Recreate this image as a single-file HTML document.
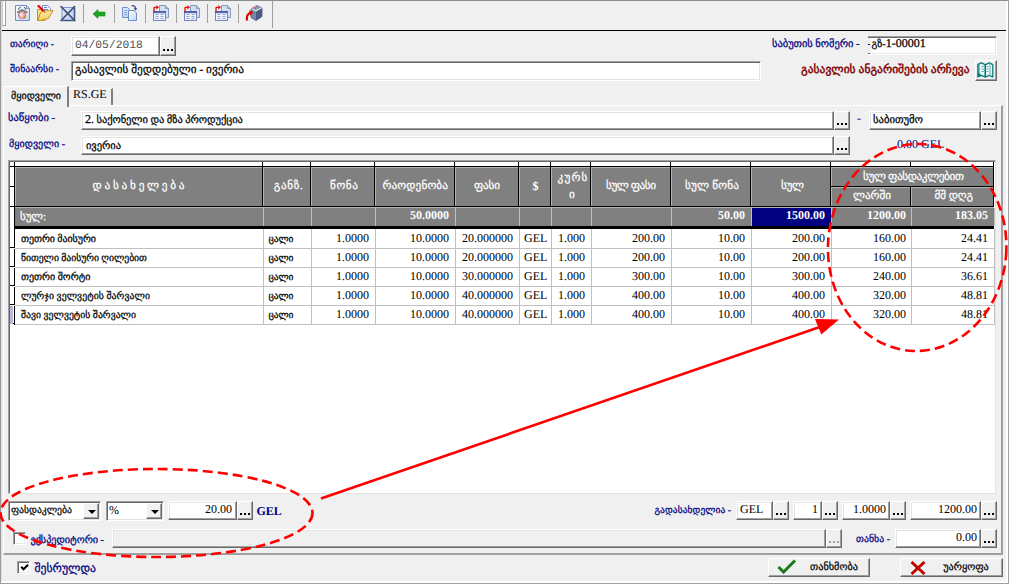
<!DOCTYPE html><html><head><meta charset="utf-8"><title>form</title><style>
html,body{margin:0;padding:0}
body{width:1009px;height:584px;overflow:hidden;background:#f0f0f0;position:relative;font-family:"Liberation Serif",serif;font-size:12px;color:#000;text-rendering:geometricPrecision}
div,span{box-sizing:border-box}
.a{position:absolute;white-space:nowrap}
.g{font-family:"Liberation Serif",serif;font-size:10px;line-height:14px;-webkit-text-stroke:0.25px currentColor}
.n{font-family:"Liberation Serif",serif;font-size:12px;line-height:14px}
.lbl{color:#000080}
.fld{position:absolute;background:#fff;border-top:1px solid #fff;border-left:1px solid #fff;border-bottom:1px solid #696969;border-right:1px solid #696969;box-shadow:inset -1px -1px 0 #a0a0a0,inset 1px 1px 0 #e3e3e3}
.fldd{background:#f0f0f0}
.sunk{position:absolute;background:#fff;border-top:1px solid #a0a0a0;border-left:1px solid #a0a0a0;border-bottom:1px solid #fff;border-right:1px solid #fff;box-shadow:inset 1px 1px 0 #696969,inset -1px -1px 0 #e8e8e8}
.btn{position:absolute;background:#f0f0f0;border-top:1px solid #fff;border-left:1px solid #fff;border-bottom:1px solid #696969;border-right:1px solid #696969;box-shadow:inset -1px -1px 0 #a0a0a0}
.dots{position:absolute;left:2px;bottom:4px;width:10px;height:2px;background:linear-gradient(90deg,#000 0 2px,transparent 2px 4px,#000 4px 6px,transparent 6px 8px,#000 8px 10px)}
.dotsd{background:linear-gradient(90deg,#a0a0a0 0 2px,transparent 2px 4px,#a0a0a0 4px 6px,transparent 6px 8px,#a0a0a0 8px 10px)}
.hc{position:absolute;background:#808080;border-top:1px solid #000;border-right:1px solid #000;border-bottom:1px solid #000;box-shadow:inset 1px 1px 0 #b4b4b4;color:#fff;text-align:center}

.hh{font-size:11.5px;line-height:15px}
.hc span{position:absolute;left:0;right:0;text-align:center}
.vl{position:absolute;width:1px;background:#c0c0c0}
.hl{position:absolute;height:1px;background:#c0c0c0}
.cell{position:absolute;white-space:nowrap;line-height:14px}
.r{text-align:right}
.sep{position:absolute;top:4px;width:1px;height:19px;background:#a0a0a0}
</style></head><body>
<div class="a" style="left:0;top:0;width:1009px;height:1px;background:#8c8c8c"></div>
<div class="a" style="left:0;top:0;width:1px;height:584px;background:#9a9a9a"></div>
<div class="a" style="left:1px;top:1px;width:1px;height:582px;background:#dcdcdc"></div>
<div class="a" style="left:1006px;top:1px;width:2px;height:582px;background:#fff"></div>
<div class="a" style="left:1008px;top:0;width:1px;height:584px;background:#a0a0a0"></div>
<div class="a" style="left:1px;top:581px;width:1007px;height:2px;background:#fff"></div>
<div class="a" style="left:0;top:583px;width:1009px;height:1px;background:#a0a0a0"></div>
<div class="a" style="left:2px;top:1px;width:4px;height:25px;background:#fff;border-left:1px solid #c8c8c8;border-right:1px solid #a0a0a0;border-bottom:1px solid #a0a0a0"></div>
<div class="a" style="left:272px;top:1px;width:1px;height:27px;background:#a0a0a0"></div>
<div class="a" style="left:2px;top:30px;width:1004px;height:1px;background:#000"></div>
<div class="sep" style="left:83px"></div>
<div class="sep" style="left:114px"></div>
<div class="sep" style="left:145px"></div>
<div class="sep" style="left:176px"></div>
<div class="sep" style="left:207px"></div>
<div class="sep" style="left:238px"></div>
<svg width="0" height="0" style="position:absolute"><defs><linearGradient id="gd" x1="0" y1="0" x2="1" y2="1"><stop offset="0" stop-color="#ffffff"/><stop offset="1" stop-color="#c4d8f6"/></linearGradient><linearGradient id="gf" x1="0" y1="0" x2="0" y2="1"><stop offset="0" stop-color="#fbe9a8"/><stop offset="1" stop-color="#f3cc62"/></linearGradient><linearGradient id="gb" x1="0" y1="0" x2="1" y2="1"><stop offset="0" stop-color="#e6f0fd"/><stop offset="1" stop-color="#b6d0f3"/></linearGradient></defs></svg><svg class="a" style="left:15px;top:5px" width="16" height="16" viewBox="0 0 16 16"><path d="M0.5 0.5 H11.5 L14.5 3.5 V15.5 H0.5 Z" fill="url(#gd)" stroke="#6f8fca"/><path d="M11.5 0.5 V3.5 H14.5 Z" fill="#c9d9f3" stroke="#6f8fca" stroke-width="0.8"/><path d="M3.4 4.6 Q3.6 2.8 5.6 2.2 M10.6 4.6 Q10.6 2.8 9.2 2.2" stroke="#2a2a2a" stroke-width="0.9" fill="none"/><path d="M4.4 5.2 Q7 3.6 9.8 5.2 L9.8 6 L4.4 6 Z" fill="#3a2a2a"/><path d="M2 6.3 Q3 5.6 5 6.2 L5.2 8.3 Q3.2 8.8 2 7.6 Z" fill="#b06a6a"/><path d="M12.6 6.3 Q11.4 5.6 9.2 6.2 L9 8.3 Q11 8.8 12.6 7.6 Z" fill="#b06a6a"/><rect x="4.6" y="5.6" width="5" height="2.4" rx="1" fill="#d8a0a0"/><circle cx="5.4" cy="6.5" r="0.95" fill="#38c0c0"/><circle cx="8.5" cy="6.5" r="0.95" fill="#38c0c0"/><ellipse cx="7" cy="10.2" rx="3.6" ry="3.8" fill="#6a3a3a"/><ellipse cx="7" cy="10.2" rx="3.1" ry="3.7" fill="#f2a2ae"/><ellipse cx="6.4" cy="9.8" rx="1.7" ry="2.2" fill="#fbd3d8"/><path d="M9.4 10.5 L11 12.6 L9.4 13.8 L8.4 13.2 Z" fill="#c8961e"/></svg><svg class="a" style="left:37px;top:5px" width="17" height="16" viewBox="0 0 17 16"><path d="M5.5 0.5 H10.5 L13.5 3.5 V8 H5.5 Z" fill="#f4f8ff" stroke="#6f8fca"/><path d="M7 2.5 H10 M7 4.5 H11" stroke="#5f86cc" stroke-width="1"/><path d="M0.5 4.5 H3.5 L5 6 H8 V15.5 H0.5 Z" fill="url(#gf)" stroke="#c8901c"/><path d="M3.5 7.5 L6.5 6 L16 5.6 L11.5 13.5 L4 15.5 L0.8 15.5 Z" fill="url(#gf)" stroke="#c8901c" stroke-linejoin="round"/><path d="M0.8 0.3 L6.8 6.3" stroke="#ee0000" stroke-width="2.2"/><path d="M6.8 6.3 L8.2 7.7" stroke="#c86030" stroke-width="1.2"/></svg><svg class="a" style="left:60px;top:5px" width="16" height="17" viewBox="0 0 16 17"><rect x="2" y="2.5" width="12.5" height="13" fill="url(#gb)" stroke="#7a96cc"/><path d="M14.5 3 V15.5 H2.5" stroke="#465684" stroke-width="1.6" fill="none"/><path d="M0.6 1.2 L15 16 M15 1.2 L0.6 16" stroke="#464e74" stroke-width="1.7"/></svg><svg class="a" style="left:92px;top:9px" width="14" height="10" viewBox="0 0 14 10"><path d="M1 5 L6 0.6 L6 3 L13 3 L13 7 L6 7 L6 9.4 Z" fill="#1ea61e" stroke="#138a13" stroke-width="0.6"/></svg><svg class="a" style="left:122px;top:5px" width="16" height="17" viewBox="0 0 16 17"><path d="M0.5 2.5 H5.5 L7.5 4.5 V12.5 H0.5 Z" fill="url(#gb)" stroke="#6f8fca"/><path d="M2 5.5 H5 M2 7.5 H5 M2 9.5 H5" stroke="#7f9fd8" stroke-width="0.9"/><path d="M6.5 5.5 H12 L14.5 8 V15.5 H6.5 Z" fill="url(#gd)" stroke="#6f8fca"/><path d="M9.5 0.8 Q13.5 0.2 13.6 4" stroke="#3a4a88" stroke-width="1.2" fill="none"/><path d="M11.6 3.2 L13.6 5.8 L15.4 3.2 Z" fill="#3a4a88"/></svg><svg class="a" style="left:153px;top:5px" width="17" height="16" viewBox="0 0 17 16"><path d="M6.5 0.5 H12.5 L15.5 3.5 V12.5 H6.5 Z" fill="#d4def2" stroke="#8a98c0"/><path d="M12.5 0.5 V3.5 H15.5" fill="#b8c4e0" stroke="#8a98c0"/><rect x="0.5" y="6.5" width="12" height="9" fill="#eef2fc" stroke="#7686bc"/><rect x="0.5" y="6.5" width="12" height="1.3" fill="#4a5aa4" stroke="#4a5aa4" stroke-width="0.7"/><path d="M2.5 9.5 H5.5 M7.5 9.5 H10.5 M2.5 11.5 H5.5 M7.5 11.5 H10.5 M2.5 13.5 H5.5 M7.5 13.5 H10.5" stroke="#98a6d0" stroke-width="1"/><path d="M1 6.5 V3 Q1 2.3 1.8 2.3 H3.5" stroke="#ee0000" stroke-width="1.3" fill="none"/><path d="M3.3 0.2 L6 2.3 L3.3 4.4 Z" fill="#ee0000"/></svg><svg class="a" style="left:184px;top:5px" width="17" height="16" viewBox="0 0 17 16"><path d="M6.5 0.5 H12.5 L15.5 3.5 V12.5 H6.5 Z" fill="#d4def2" stroke="#8a98c0"/><path d="M12.5 0.5 V3.5 H15.5" fill="#b8c4e0" stroke="#8a98c0"/><rect x="0.5" y="6.5" width="12" height="9" fill="#eef2fc" stroke="#7686bc"/><rect x="0.5" y="6.5" width="12" height="1.3" fill="#4a5aa4" stroke="#4a5aa4" stroke-width="0.7"/><path d="M2.5 9.5 H5.5 M7.5 9.5 H10.5 M2.5 11.5 H5.5 M7.5 11.5 H10.5 M2.5 13.5 H5.5 M7.5 13.5 H10.5" stroke="#98a6d0" stroke-width="1"/><path d="M1 6.5 V3 Q1 2.3 1.8 2.3 H3.5" stroke="#ee0000" stroke-width="1.3" fill="none"/><path d="M3.3 0.2 L6 2.3 L3.3 4.4 Z" fill="#ee0000"/></svg><svg class="a" style="left:215px;top:5px" width="17" height="16" viewBox="0 0 17 16"><path d="M6.5 0.5 H12.5 L15.5 3.5 V12.5 H6.5 Z" fill="#d4def2" stroke="#8a98c0"/><path d="M12.5 0.5 V3.5 H15.5" fill="#b8c4e0" stroke="#8a98c0"/><rect x="0.5" y="6.5" width="12" height="9" fill="#eef2fc" stroke="#7686bc"/><rect x="0.5" y="6.5" width="12" height="1.3" fill="#4a5aa4" stroke="#4a5aa4" stroke-width="0.7"/><path d="M2.5 9.5 H5.5 M7.5 9.5 H10.5 M2.5 11.5 H5.5 M7.5 11.5 H10.5 M2.5 13.5 H5.5 M7.5 13.5 H10.5" stroke="#98a6d0" stroke-width="1"/><path d="M1 6.5 V3 Q1 2.3 1.8 2.3 H3.5" stroke="#ee0000" stroke-width="1.3" fill="none"/><path d="M3.3 0.2 L6 2.3 L3.3 4.4 Z" fill="#ee0000"/></svg><svg class="a" style="left:245px;top:4px" width="18" height="18" viewBox="0 0 18 18"><path d="M6 5 L12 1.5 L17 4 L17 12.5 L11 16.5 L6 13.5 Z" fill="#7886a8" stroke="#465078" stroke-width="0.8"/><path d="M11 7.5 L17 4 L17 12.5 L11 16.5 Z" fill="#4e5a84"/><path d="M6 5 L12 1.5 L17 4 L11 7.5 Z" fill="#f4f4f8"/><path d="M7.3 4.6 L13 1.9" stroke="#d04040" stroke-width="0.9"/><path d="M8.6 5.3 L14.3 2.6" stroke="#3050d0" stroke-width="0.9"/><path d="M9.9 6 L15.6 3.3" stroke="#30a060" stroke-width="0.9"/><path d="M2 16.5 Q1.2 10 5.5 9" stroke="#e00000" stroke-width="2.2" fill="none"/><path d="M4 6.2 L8.2 8.2 L5.2 11.4 Z" fill="#e00000"/></svg>
<div class="a g lbl" style="left:10px;top:38px;;font-size:9.75px;letter-spacing:0.00px;">თარიღი -</div>
<div class="fld" style="left:71px;top:36px;width:89px;height:20px"></div>
<div class="a" style="left:75px;top:39px;font-family:'Liberation Mono',monospace;font-size:11.3px;line-height:14px;color:#505050">04/05/2018</div>
<div class="btn" style="left:160px;top:36px;width:16px;height:20px"><div class="dots"></div></div>
<div class="a g lbl" style="left:772px;top:38px;;font-size:10.5px;letter-spacing:-0.04px;">საბუთის ნომერი -</div>
<div class="a" style="left:868px;top:36px;width:129px;height:19px;background:#fff;border-top:1px solid #a0a0a0;border-right:1px solid #fff;border-bottom:1px solid #fff;box-shadow:inset 0 1px 0 #696969,inset -1px -1px 0 #e8e8e8"></div>
<div class="a" style="left:868px;top:38px;width:3px;height:15px;background:#f0f0f0"></div>
<div class="a" style="left:868px;top:44px;width:2px;height:1px;background:#000080"></div>
<div class="a" style="left:868px;top:53px;width:2px;height:1px;background:#696969"></div>
<div class="a g" style="left:871.5px;top:35.5px;color:#000;font-size:10px">გზ-<span class="n">1-00001</span></div>
<div class="a g lbl" style="left:10px;top:63px;;font-size:9.75px;letter-spacing:0.03px;">შინაარსი -</div>
<div class="a" style="left:71px;top:61px;width:690px;height:20px;background:#fff;border-top:1px solid #a0a0a0;border-left:1px solid #a0a0a0;border-right:1px solid #fff;border-bottom:1px solid #fff;box-shadow:inset 1px 1px 0 #696969,inset -1px -1px 0 #e3e3e3"></div>
<div class="a g" style="left:75px;top:63px;color:#000;;font-size:11.25px;letter-spacing:0.02px;">გასავლის შედდებული - ივერია</div>
<div class="a g" style="left:801px;top:63px;color:#800000;-webkit-text-stroke:0.45px #800000;;font-size:11.5px;letter-spacing:0.02px;">გასავლის ანგარიშების არჩევა</div>
<div class="btn" style="left:975px;top:60px;width:22px;height:21px"></div>
<svg class="a" style="left:977px;top:62px" width="17" height="16" viewBox="0 0 17 16"><path d="M0.8 2.6 L4.2 0.9 L8.2 2.6 L8.2 15 L4.2 13.4 L0.8 15 Z" fill="#eaf6f6" stroke="#007474" stroke-width="1.2" stroke-linejoin="round"/><path d="M8.4 2.6 L12.4 0.9 L15.8 2.6 L15.8 15 L12.4 13.4 L8.4 15 Z" fill="#eaf6f6" stroke="#007474" stroke-width="1.2" stroke-linejoin="round"/><path d="M0.8 9.5 L4.4 13.3 L0.8 15 Z" fill="#008080"/><path d="M0.8 2.6 L2.6 1.8 L2.6 11.4 L0.8 9.5 Z" fill="#30a0a0"/><path d="M13 1.4 V13.5" stroke="#80c8c8" stroke-width="1.4"/><path d="M4.6 4.5 H6.8 M4.6 7 H6.8 M4.6 9.5 H6.8 M9.6 4.5 H11.4 M9.6 7 H11.4 M9.6 9.5 H11.4" stroke="#50b0b0" stroke-width="1"/></svg>
<div class="a" style="left:3px;top:105px;width:1000px;height:450px;border-top:1px solid #fff;border-left:1px solid #fff;border-right:2px solid #a0a0a0;border-bottom:2px solid #a0a0a0"></div>
<div class="a" style="left:3px;top:86px;width:66px;height:21px;background:#f0f0f0;border-top:1px solid #fff;border-left:1px solid #fff;border-right:2px solid #808080"></div>
<div class="a" style="left:69px;top:88px;width:44px;height:17px;border-top:1px solid #fff;border-right:2px solid #808080"></div>
<div class="a g" style="left:11px;top:90px;color:#000;font-size:10.0px;letter-spacing:0.03px;">მყიდველი</div>
<div class="a n" style="left:73px;top:87px;">RS.GE</div>
<div class="a g lbl" style="left:8px;top:112px;;font-size:10.5px;letter-spacing:0.01px;">საწყობი -</div>
<div class="fld" style="left:81px;top:111px;width:753px;height:19px"></div>
<div class="a g" style="left:85px;top:112px;color:#000;;font-size:10.5px;letter-spacing:-0.06px;"><span class="n">2.</span> საქონელი და მზა პროდუქცია</div>
<div class="btn" style="left:834px;top:111px;width:16px;height:19px"><div class="dots"></div></div>
<div class="a n lbl" style="left:857px;top:111px;">-</div>
<div class="fld" style="left:869px;top:111px;width:112px;height:19px"></div>
<div class="a g" style="left:873px;top:112.5px;color:#000;;font-size:10.75px;letter-spacing:-0.07px;">საბითუმო</div>
<div class="btn" style="left:981px;top:111px;width:16px;height:19px"><div class="dots"></div></div>
<div class="a g lbl" style="left:9px;top:137.5px;;font-size:10.0px;letter-spacing:0.04px;">მყიდველი -</div>
<div class="fld" style="left:81px;top:136px;width:753px;height:19px"></div>
<div class="a g" style="left:86px;top:139.5px;color:#000;font-size:10.5px;letter-spacing:-0.06px;">ივერია</div>
<div class="btn" style="left:834px;top:136px;width:16px;height:19px"><div class="dots"></div></div>
<div class="a n lbl" style="left:897px;top:137px;">0.00 GEL</div>
<div class="a" style="left:8px;top:160px;width:988px;height:334px;background:#fff;border-top:1px solid #a0a0a0;border-left:1px solid #a0a0a0;border-right:1px solid #e3e3e3;border-bottom:1px solid #e3e3e3;box-shadow:inset 1px 1px 0 #696969"></div>
<div class="a" style="left:14px;top:162px;width:1px;height:163px;background:#000"></div>
<div class="a" style="left:10px;top:166px;width:4px;height:1px;background:#000"></div>
<div class="a" style="left:10px;top:186px;width:4px;height:1px;background:#000"></div>
<div class="a" style="left:10px;top:206px;width:4px;height:1px;background:#000"></div>
<div class="a" style="left:10px;top:247px;width:4px;height:1px;background:#000"></div>
<div class="a" style="left:10px;top:266px;width:4px;height:1px;background:#000"></div>
<div class="a" style="left:10px;top:285px;width:4px;height:1px;background:#000"></div>
<div class="a" style="left:10px;top:304px;width:4px;height:1px;background:#000"></div>
<div class="a" style="left:10px;top:323px;width:4px;height:1px;background:#000"></div>
<div class="a" style="left:14px;top:248px;width:1px;height:1px;background:#fff"></div>
<div class="a" style="left:14px;top:267px;width:1px;height:1px;background:#fff"></div>
<div class="a" style="left:14px;top:286px;width:1px;height:1px;background:#fff"></div>
<div class="a" style="left:14px;top:305px;width:1px;height:1px;background:#fff"></div>
<div class="a" style="left:10px;top:306px;width:3px;height:18px;background:#b8b8d8"></div>
<div class="a" style="left:262px;top:162px;width:1px;height:5px;background:#000"></div>
<div class="a" style="left:310px;top:162px;width:1px;height:5px;background:#000"></div>
<div class="a" style="left:374px;top:162px;width:1px;height:5px;background:#000"></div>
<div class="a" style="left:454px;top:162px;width:1px;height:5px;background:#000"></div>
<div class="a" style="left:518px;top:162px;width:1px;height:5px;background:#000"></div>
<div class="a" style="left:550px;top:162px;width:1px;height:5px;background:#000"></div>
<div class="a" style="left:590px;top:162px;width:1px;height:5px;background:#000"></div>
<div class="a" style="left:670px;top:162px;width:1px;height:5px;background:#000"></div>
<div class="a" style="left:750px;top:162px;width:1px;height:5px;background:#000"></div>
<div class="a" style="left:830px;top:162px;width:1px;height:5px;background:#000"></div>
<div class="a" style="left:910px;top:162px;width:1px;height:5px;background:#000"></div>
<div class="a" style="left:993px;top:162px;width:1px;height:5px;background:#000"></div>
<div class="hc" style="left:15px;top:166px;width:248px;height:41px"></div>
<div class="hc" style="left:263px;top:166px;width:48px;height:41px"></div>
<div class="hc" style="left:311px;top:166px;width:64px;height:41px"></div>
<div class="hc" style="left:375px;top:166px;width:80px;height:41px"></div>
<div class="hc" style="left:455px;top:166px;width:64px;height:41px"></div>
<div class="hc" style="left:519px;top:166px;width:32px;height:41px"></div>
<div class="hc" style="left:551px;top:166px;width:40px;height:41px"></div>
<div class="hc" style="left:591px;top:166px;width:80px;height:41px"></div>
<div class="hc" style="left:671px;top:166px;width:80px;height:41px"></div>
<div class="hc" style="left:751px;top:166px;width:80px;height:41px"></div>
<div class="hc" style="left:831px;top:166px;width:163px;height:21px"></div>
<div class="hc" style="left:831px;top:186px;width:80px;height:21px"></div>
<div class="hc" style="left:911px;top:186px;width:83px;height:21px"></div>
<div class="a g hh" style="left:92.6px;top:179px;color:#fff;font-size:11.25px;letter-spacing:-0.04px;">დ ა ს ა ხ ე ლ ე ბ ა</div>
<div class="a g hh" style="left:273.75px;top:179px;color:#fff;font-size:11.25px;letter-spacing:0.61px;">განზ.</div>
<div class="a g hh" style="left:330px;top:179px;color:#fff;font-size:11.25px;letter-spacing:0.58px;">წონა</div>
<div class="a g hh" style="left:382.5px;top:179px;color:#fff;font-size:11.25px;letter-spacing:0.10px;">რაოდენობა</div>
<div class="a g hh" style="left:474px;top:179px;color:#fff;font-size:11.25px;letter-spacing:-0.23px;">ფასი</div>
<div class="a g hh" style="left:557.5px;top:171px;color:#fff;font-size:11.25px;letter-spacing:1.18px;">კურს</div>
<div class="a g hh" style="left:606px;top:179px;color:#fff;font-size:11.25px;letter-spacing:-0.46px;">სულ ფასი</div>
<div class="a g hh" style="left:685px;top:179px;color:#fff;font-size:11.25px;letter-spacing:0.17px;">სულ წონა</div>
<div class="a g hh" style="left:781px;top:179px;color:#fff;font-size:11.25px;letter-spacing:-0.37px;">სულ</div>
<div class="a g hh" style="left:863px;top:169.5px;color:#fff;font-size:11.25px;letter-spacing:-0.39px;">სულ ფასდაკლებით</div>
<div class="a g hh" style="left:853px;top:189px;color:#fff;font-size:11.25px;letter-spacing:-0.07px;">ლარში</div>
<div class="a g hh" style="left:934.5px;top:189px;color:#fff;font-size:11.25px;letter-spacing:-0.12px;">მშ დღგ</div>
<div class="a g hh" style="left:569px;top:187.5px;color:#fff;font-size:11.25px">ი</div>
<div class="a n" style="left:532.5px;top:179px;color:#fff;font-weight:bold">$</div>
<div class="a" style="left:15px;top:207px;width:979px;height:19px;background:#808080;border-top:1px solid #b4b4b4"></div>
<div class="a" style="left:752px;top:208px;width:79px;height:18px;background:#000080"></div>
<div class="a" style="left:15px;top:226px;width:979px;height:3px;background:#000"></div>
<div class="vl" style="left:263px;top:208px;height:18px"></div>
<div class="vl" style="left:263px;top:229px;height:96px"></div>
<div class="vl" style="left:311px;top:208px;height:18px"></div>
<div class="vl" style="left:311px;top:229px;height:96px"></div>
<div class="vl" style="left:375px;top:208px;height:18px"></div>
<div class="vl" style="left:375px;top:229px;height:96px"></div>
<div class="vl" style="left:455px;top:208px;height:18px"></div>
<div class="vl" style="left:455px;top:229px;height:96px"></div>
<div class="vl" style="left:519px;top:208px;height:18px"></div>
<div class="vl" style="left:519px;top:229px;height:96px"></div>
<div class="vl" style="left:551px;top:208px;height:18px"></div>
<div class="vl" style="left:551px;top:229px;height:96px"></div>
<div class="vl" style="left:591px;top:208px;height:18px"></div>
<div class="vl" style="left:591px;top:229px;height:96px"></div>
<div class="vl" style="left:671px;top:208px;height:18px"></div>
<div class="vl" style="left:671px;top:229px;height:96px"></div>
<div class="vl" style="left:751px;top:208px;height:18px"></div>
<div class="vl" style="left:751px;top:229px;height:96px"></div>
<div class="vl" style="left:831px;top:208px;height:18px"></div>
<div class="vl" style="left:831px;top:229px;height:96px"></div>
<div class="vl" style="left:911px;top:208px;height:18px"></div>
<div class="vl" style="left:911px;top:229px;height:96px"></div>
<div class="vl" style="left:994px;top:208px;height:18px"></div>
<div class="vl" style="left:994px;top:229px;height:96px"></div>
<div class="hl" style="left:15px;top:248px;width:980px"></div>
<div class="hl" style="left:15px;top:267px;width:980px"></div>
<div class="hl" style="left:15px;top:286px;width:980px"></div>
<div class="hl" style="left:15px;top:305px;width:980px"></div>
<div class="hl" style="left:15px;top:324px;width:980px"></div>
<div class="a g" style="left:20px;top:210px;color:#fff;;font-size:11.0px;letter-spacing:-0.09px;">სულ:</div>
<div class="cell n r" style="right:560px;top:208px;color:#fff;font-weight:bold">50.0000</div>
<div class="cell n r" style="right:264px;top:208px;color:#fff;font-weight:bold">50.00</div>
<div class="cell n r" style="right:184px;top:208px;color:#fff;font-weight:bold">1500.00</div>
<div class="cell n r" style="right:103px;top:208px;color:#fff;font-weight:bold">1200.00</div>
<div class="cell n r" style="right:21px;top:208px;color:#fff;font-weight:bold">183.05</div>
<div class="a g" style="left:21px;top:232.5px;;font-size:10.0px;letter-spacing:-0.07px;">თეთრი მაისური</div>
<div class="a g" style="left:268.5px;top:232.5px;;font-size:9.5px;letter-spacing:-0.09px;">ცალი</div>
<div class="cell n r" style="right:640px;top:231px;">1.0000</div>
<div class="cell n r" style="right:560px;top:231px;">10.0000</div>
<div class="cell n r" style="right:496px;top:231px;">20.000000</div>
<div class="cell n" style="left:524px;top:231px">GEL</div>
<div class="cell n r" style="right:424px;top:231px;">1.000</div>
<div class="cell n r" style="right:344px;top:231px;">200.00</div>
<div class="cell n r" style="right:264px;top:231px;">10.00</div>
<div class="cell n r" style="right:184px;top:231px;">200.00</div>
<div class="cell n r" style="right:103px;top:231px;">160.00</div>
<div class="cell n r" style="right:21px;top:231px;">24.41</div>
<div class="a g" style="left:21px;top:251.5px;;font-size:9.75px;letter-spacing:-0.06px;">წითელი მაისური ღილებით</div>
<div class="a g" style="left:268.5px;top:251.5px;;font-size:9.5px;letter-spacing:-0.09px;">ცალი</div>
<div class="cell n r" style="right:640px;top:250px;">1.0000</div>
<div class="cell n r" style="right:560px;top:250px;">10.0000</div>
<div class="cell n r" style="right:496px;top:250px;">20.000000</div>
<div class="cell n" style="left:524px;top:250px">GEL</div>
<div class="cell n r" style="right:424px;top:250px;">1.000</div>
<div class="cell n r" style="right:344px;top:250px;">200.00</div>
<div class="cell n r" style="right:264px;top:250px;">10.00</div>
<div class="cell n r" style="right:184px;top:250px;">200.00</div>
<div class="cell n r" style="right:103px;top:250px;">160.00</div>
<div class="cell n r" style="right:21px;top:250px;">24.41</div>
<div class="a g" style="left:21px;top:270.5px;;font-size:10.0px;letter-spacing:-0.01px;">თეთრი შორტი</div>
<div class="a g" style="left:268.5px;top:270.5px;;font-size:9.5px;letter-spacing:-0.09px;">ცალი</div>
<div class="cell n r" style="right:640px;top:269px;">1.0000</div>
<div class="cell n r" style="right:560px;top:269px;">10.0000</div>
<div class="cell n r" style="right:496px;top:269px;">30.000000</div>
<div class="cell n" style="left:524px;top:269px">GEL</div>
<div class="cell n r" style="right:424px;top:269px;">1.000</div>
<div class="cell n r" style="right:344px;top:269px;">300.00</div>
<div class="cell n r" style="right:264px;top:269px;">10.00</div>
<div class="cell n r" style="right:184px;top:269px;">300.00</div>
<div class="cell n r" style="right:103px;top:269px;">240.00</div>
<div class="cell n r" style="right:21px;top:269px;">36.61</div>
<div class="a g" style="left:21px;top:289.5px;;font-size:9.75px;letter-spacing:0.07px;">ლურჯი ველვეტის შარვალი</div>
<div class="a g" style="left:268.5px;top:289.5px;;font-size:9.5px;letter-spacing:-0.09px;">ცალი</div>
<div class="cell n r" style="right:640px;top:288px;">1.0000</div>
<div class="cell n r" style="right:560px;top:288px;">10.0000</div>
<div class="cell n r" style="right:496px;top:288px;">40.000000</div>
<div class="cell n" style="left:524px;top:288px">GEL</div>
<div class="cell n r" style="right:424px;top:288px;">1.000</div>
<div class="cell n r" style="right:344px;top:288px;">400.00</div>
<div class="cell n r" style="right:264px;top:288px;">10.00</div>
<div class="cell n r" style="right:184px;top:288px;">400.00</div>
<div class="cell n r" style="right:103px;top:288px;">320.00</div>
<div class="cell n r" style="right:21px;top:288px;">48.81</div>
<div class="a g" style="left:21px;top:308.5px;;font-size:9.75px;letter-spacing:0.01px;">შავი ველვეტის შარვალი</div>
<div class="a g" style="left:268.5px;top:308.5px;;font-size:9.5px;letter-spacing:-0.09px;">ცალი</div>
<div class="cell n r" style="right:640px;top:307px;">1.0000</div>
<div class="cell n r" style="right:560px;top:307px;">10.0000</div>
<div class="cell n r" style="right:496px;top:307px;">40.000000</div>
<div class="cell n" style="left:524px;top:307px">GEL</div>
<div class="cell n r" style="right:424px;top:307px;">1.000</div>
<div class="cell n r" style="right:344px;top:307px;">400.00</div>
<div class="cell n r" style="right:264px;top:307px;">10.00</div>
<div class="cell n r" style="right:184px;top:307px;">400.00</div>
<div class="cell n r" style="right:103px;top:307px;">320.00</div>
<div class="cell n r" style="right:21px;top:307px;">48.81</div>
<div class="a" style="left:8px;top:501px;width:93px;height:20px;background:#fff;border-top:1px solid #a0a0a0;border-left:1px solid #a0a0a0;border-right:1px solid #fff;border-bottom:1px solid #fff;box-shadow:inset 1px 1px 0 #646464,inset -1px -1px 0 #e3e3e3"></div>
<div class="btn" style="left:83px;top:503px;width:16px;height:16px"><div style="position:absolute;left:4px;top:6px;width:0;height:0;border-left:4px solid transparent;border-right:4px solid transparent;border-top:4px solid #000"></div></div>
<div class="a g" style="left:11px;top:504px;;font-size:9.75px;letter-spacing:-0.04px;">ფასდაკლება</div>
<div class="a" style="left:106px;top:501px;width:58px;height:20px;background:#fff;border-top:1px solid #a0a0a0;border-left:1px solid #a0a0a0;border-right:1px solid #fff;border-bottom:1px solid #fff;box-shadow:inset 1px 1px 0 #646464,inset -1px -1px 0 #e3e3e3"></div>
<div class="btn" style="left:146px;top:503px;width:16px;height:16px"><div style="position:absolute;left:4px;top:6px;width:0;height:0;border-left:4px solid transparent;border-right:4px solid transparent;border-top:4px solid #000"></div></div>
<div class="a n" style="left:109px;top:502.5px;">%</div>
<div class="fld" style="left:168px;top:501px;width:69px;height:19px"></div>
<div class="cell n r" style="right:777px;top:502px;">20.00</div>
<div class="btn" style="left:237px;top:501px;width:16px;height:19px"><div class="dots"></div></div>
<div class="a n lbl" style="left:256.5px;top:504px;font-weight:bold">GEL</div>
<div class="a g lbl" style="right:278px;top:503.5px;;font-size:9.5px;letter-spacing:0.06px;">გადასახდელია -</div>
<div class="fld" style="left:736px;top:501px;width:37px;height:19px"></div>
<div class="a n" style="left:740px;top:502px;">GEL</div>
<div class="btn" style="left:773px;top:501px;width:16px;height:19px"><div class="dots"></div></div>
<div class="fld" style="left:793px;top:501px;width:29px;height:19px"></div>
<div class="cell n r" style="right:191px;top:502px;">1</div>
<div class="btn" style="left:822px;top:501px;width:16px;height:19px"><div class="dots"></div></div>
<div class="fld" style="left:842px;top:501px;width:48px;height:19px"></div>
<div class="cell n r" style="right:123px;top:502px;">1.0000</div>
<div class="btn" style="left:890px;top:501px;width:16px;height:19px"><div class="dots"></div></div>
<div class="fld" style="left:910px;top:501px;width:71px;height:19px"></div>
<div class="cell n r" style="right:32px;top:502px;">1200.00</div>
<div class="btn" style="left:981px;top:501px;width:16px;height:19px"><div class="dots"></div></div>
<div class="sunk" style="left:13px;top:532px;width:13px;height:13px"></div>
<div class="a g lbl" style="left:30.5px;top:533.5px;;font-size:10.25px;letter-spacing:-0.05px;">ექსპედიტორი -</div>
<div class="fld fldd" style="left:112px;top:529px;width:714px;height:19px"></div>
<div class="btn" style="left:826px;top:529px;width:16px;height:19px"><div class="dots dotsd"></div></div>
<div class="a g lbl" style="left:856px;top:533px;;font-size:9.75px;letter-spacing:0.07px;">თანხა -</div>
<div class="fld" style="left:895px;top:529px;width:86px;height:19px"></div>
<div class="cell n r" style="right:32px;top:530px;">0.00</div>
<div class="btn" style="left:981px;top:529px;width:16px;height:19px"><div class="dots"></div></div>
<div class="sunk" style="left:17px;top:561px;width:13px;height:13px"></div>
<svg class="a" style="left:20px;top:563px" width="9" height="9" viewBox="0 0 9 9"><path d="M1.2 3.8 L3.6 6.2 L8 1.8" stroke="#000" stroke-width="2.1" fill="none"/></svg>
<div class="a g lbl" style="left:34.5px;top:562px;;font-size:11.75px;letter-spacing:-0.04px;">შესრულდა</div>
<div class="btn" style="left:768px;top:558px;width:102px;height:19px"></div>
<svg class="a" style="left:777px;top:559px" width="20" height="15" viewBox="0 0 20 15"><path d="M1.5 8 L6.5 13 L18 1.5" stroke="#1a7a1a" stroke-width="3" fill="none"/></svg>
<div class="a g" style="left:810px;top:561px;color:#000;font-size:10.25px;letter-spacing:-0.01px;">თანხმობა</div>
<div class="btn" style="left:900px;top:558px;width:103px;height:19px"></div>
<svg class="a" style="left:910px;top:560.5px" width="16" height="14" viewBox="0 0 16 14"><path d="M1.5 1 L14.5 13 M14.5 1 L1.5 13" stroke="#c00000" stroke-width="2.9" fill="none"/></svg>
<div class="a g" style="left:943.3px;top:561px;color:#000;font-size:10.25px;letter-spacing:-0.04px;">უარყოფა</div>
<svg class="a" style="left:0;top:0;pointer-events:none" width="1009" height="584" viewBox="0 0 1009 584"><ellipse cx="917.2" cy="247.5" rx="89.2" ry="103.5" fill="none" stroke="#ff0000" stroke-width="2.6" stroke-dasharray="10 5" transform="rotate(2 917 247)"/><ellipse cx="156.5" cy="513" rx="156" ry="44" fill="none" stroke="#ff0000" stroke-width="2.6" stroke-dasharray="10 5"/><line x1="321" y1="498.5" x2="822" y2="326.3" stroke="#ff0000" stroke-width="2.6"/><polygon points="815,319 839,319.4 821.3,334.5" fill="#ff0000"/></svg>
</body></html>
